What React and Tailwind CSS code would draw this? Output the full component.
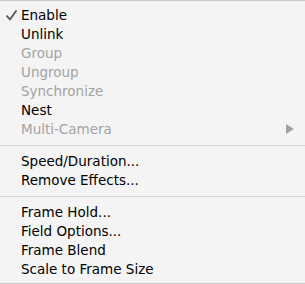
const groups = [
  [
    { label: 'Enable', checked: true },
    { label: 'Unlink' },
    { label: 'Group', disabled: true },
    { label: 'Ungroup', disabled: true },
    { label: 'Synchronize', disabled: true },
    { label: 'Nest' },
    { label: 'Multi-Camera', disabled: true, submenu: true },
  ],
  [{ label: 'Speed/Duration...' }, { label: 'Remove Effects...' }],
  [
    { label: 'Frame Hold...' },
    { label: 'Field Options...' },
    { label: 'Frame Blend' },
    { label: 'Scale to Frame Size' },
  ],
];

function MenuItem({ item }) {
  return (
    <div
      className={`relative flex h-[19px] items-center pl-[21px] text-[13.5px] leading-none ${
        item.disabled ? 'text-[#a3a3a3]' : 'text-black'
      }`}
    >
      {item.checked && (
        <svg className="absolute left-[6px] top-[4px]" width="11" height="11" viewBox="0 0 11 11">
          <path d="M1 6.2 L4 9.5 L10 1" fill="none" stroke="#555" strokeWidth="1.8" strokeLinecap="round" strokeLinejoin="round" />
        </svg>
      )}
      <span>{item.label}</span>
      {item.submenu && (
        <svg className="absolute right-[11px] top-[4px]" width="8" height="10" viewBox="0 0 8 10">
          <path d="M0 0 L8 5 L0 10 Z" fill="#a3a3a3" />
        </svg>
      )}
    </div>
  );
}

export default function App() {
  return (
    <div
      className="flex h-[284px] w-[305px] flex-col border-y border-[#c8c8c8] bg-[#f4f4f4] pt-[5px]"
      style={{ fontFamily: '"DejaVu Sans", sans-serif' }}
    >
      {groups.map((group, gi) => (
        <div key={gi}>
          {gi > 0 && (
            <div className="py-[6px]">
              <div className="h-px bg-[#d6d6d6]" />
            </div>
          )}
          {group.map((item) => (
            <MenuItem key={item.label} item={item} />
          ))}
        </div>
      ))}
    </div>
  );
}
